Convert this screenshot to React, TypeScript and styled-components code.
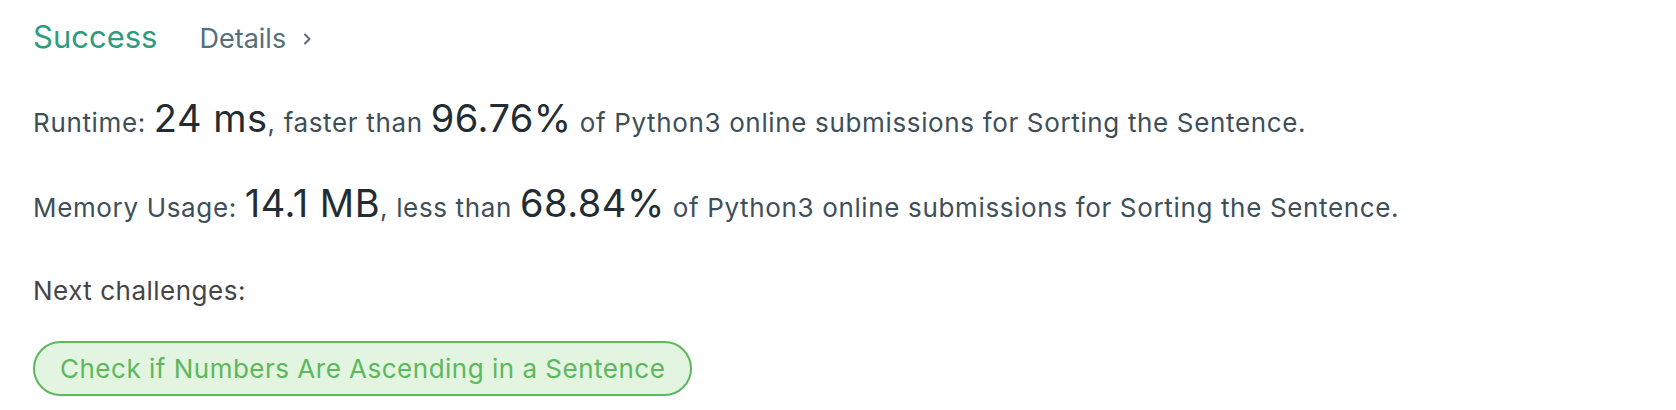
import React from 'react';
import styled, { createGlobalStyle } from 'styled-components';

const GlobalStyle = createGlobalStyle`
  html, body {
    margin: 0;
    padding: 0;
    background: #ffffff;
  }
  body {
    font-family: Inter, "Noto Sans", "Liberation Sans", sans-serif;
    -webkit-font-smoothing: antialiased;
  }
`;

const Page = styled.div`
  padding: 17px 0 0 33px;
`;

const Header = styled.div`
  display: flex;
  align-items: baseline;
  height: 40px;
  line-height: 40px;
  margin-bottom: 42px;
`;

const Status = styled.span`
  font-size: 31px;
  color: #2f9c7f;
  margin-right: 42px;
`;

const DetailsLink = styled.a`
  display: inline-flex;
  align-items: center;
  gap: 16px;
  font-size: 27px;
  color: #546e7a;
  text-decoration: none;
  cursor: pointer;
`;

const Stat = styled.p<{ $gap: number }>`
  margin: 0 0 ${(p) => p.$gap}px;
  font-size: 26px;
  letter-spacing: 0.65px;
  line-height: 48px;
  color: #3d4f59;
  white-space: nowrap;
`;

const Big = styled.span`
  font-size: 38px;
  letter-spacing: 0.5px;
  line-height: 1;
  color: #222d33;
`;

const Label = styled.p`
  margin: 0 0 26px;
  font-size: 26px;
  letter-spacing: 0.5px;
  line-height: 48px;
  color: #454545;
`;

const Challenge = styled.a`
  display: inline-block;
  box-sizing: border-box;
  height: 55px;
  padding: 0 25px;
  border: 2px solid #5cb85c;
  border-radius: 28px;
  background: #e3f4e1;
  color: #5cb85c;
  font-size: 26px;
  letter-spacing: 0.5px;
  line-height: 51px;
  text-decoration: none;
  cursor: pointer;
`;

const Chevron = () => (
  <svg width="10" height="12" viewBox="0 0 10 12" fill="none">
    <path d="M3 1.5 L7.5 6 L3 10.5" stroke="#546e7a" strokeWidth="2" strokeLinecap="round" strokeLinejoin="round" />
  </svg>
);

export default function App() {
  return (
    <>
      <GlobalStyle />
      <Page>
        <Header>
          <Status>Success</Status>
          <DetailsLink>
            Details
            <Chevron />
          </DetailsLink>
        </Header>
        <Stat $gap={37}>
          Runtime: <Big>24 ms</Big>, faster than <Big>96.76%</Big> of Python3 online submissions for Sorting the Sentence.
        </Stat>
        <Stat $gap={35}>
          Memory Usage: <Big>14.1 MB</Big>, less than <Big>68.84%</Big> of Python3 online submissions for Sorting the Sentence.
        </Stat>
        <Label>Next challenges:</Label>
        <Challenge>Check if Numbers Are Ascending in a Sentence</Challenge>
      </Page>
    </>
  );
}
